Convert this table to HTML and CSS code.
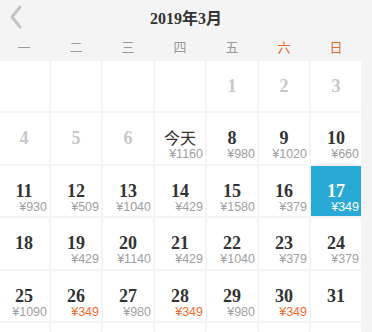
FILE: index.html
```html
<!DOCTYPE html>
<html lang="zh-CN">
<head>
<meta charset="utf-8">
<title>2019年3月</title>
<link rel="stylesheet" href="styles.css">
</head>
<body>
<div class="cal">
  <div class="head">
    <span class="back"><svg width="14" height="24" viewBox="0 0 14 24"><polyline points="11,2 3,12 11,22" fill="none" stroke="#c4c4c4" stroke-width="3" stroke-linecap="round" stroke-linejoin="round"/></svg></span>
    <span class="title">2019年3月</span>
  </div>
  <div class="weeks">
    <span>一</span><span>二</span><span>三</span><span>四</span><span>五</span><span class="we">六</span><span class="we">日</span>
  </div>
  <div class="grid">
    <div class="cell"></div>
    <div class="cell"></div>
    <div class="cell"></div>
    <div class="cell"></div>
    <div class="cell"><b class="num off">1</b></div>
    <div class="cell"><b class="num off">2</b></div>
    <div class="cell"><b class="num off">3</b></div>

    <div class="cell"><b class="num off">4</b></div>
    <div class="cell"><b class="num off">5</b></div>
    <div class="cell"><b class="num off">6</b></div>
    <div class="cell"><span class="today">今天</span><span class="price">¥1160</span></div>
    <div class="cell"><b class="num">8</b><span class="price">¥980</span></div>
    <div class="cell"><b class="num">9</b><span class="price">¥1020</span></div>
    <div class="cell"><b class="num">10</b><span class="price">¥660</span></div>

    <div class="cell"><b class="num">11</b><span class="price">¥930</span></div>
    <div class="cell"><b class="num">12</b><span class="price">¥509</span></div>
    <div class="cell"><b class="num">13</b><span class="price">¥1040</span></div>
    <div class="cell"><b class="num">14</b><span class="price">¥429</span></div>
    <div class="cell"><b class="num">15</b><span class="price">¥1580</span></div>
    <div class="cell"><b class="num">16</b><span class="price">¥379</span></div>
    <div class="cell sel"><b class="num">17</b><span class="price">¥349</span></div>

    <div class="cell"><b class="num">18</b></div>
    <div class="cell"><b class="num">19</b><span class="price">¥429</span></div>
    <div class="cell"><b class="num">20</b><span class="price">¥1140</span></div>
    <div class="cell"><b class="num">21</b><span class="price">¥429</span></div>
    <div class="cell"><b class="num">22</b><span class="price">¥1040</span></div>
    <div class="cell"><b class="num">23</b><span class="price">¥379</span></div>
    <div class="cell"><b class="num">24</b><span class="price">¥379</span></div>

    <div class="cell"><b class="num">25</b><span class="price">¥1090</span></div>
    <div class="cell"><b class="num">26</b><span class="price low">¥349</span></div>
    <div class="cell"><b class="num">27</b><span class="price">¥980</span></div>
    <div class="cell"><b class="num">28</b><span class="price low">¥349</span></div>
    <div class="cell"><b class="num">29</b><span class="price">¥980</span></div>
    <div class="cell"><b class="num">30</b><span class="price low">¥349</span></div>
    <div class="cell"><b class="num">31</b></div>

    <div class="cell"></div>
    <div class="cell"></div>
    <div class="cell"></div>
    <div class="cell"></div>
    <div class="cell"></div>
    <div class="cell"></div>
    <div class="cell"></div>
  </div>
</div>
</body>
</html>
```

FILE: styles.css
```css
html, body {
  margin: 0;
  padding: 0;
  background: #f4f4f4;
  overflow: hidden;
}
.cal {
  width: 372px;
  height: 332px;
  overflow: hidden;
  font-family: "Liberation Sans", "Noto Sans CJK SC", sans-serif;
}
.head {
  height: 34px;
  display: flex;
  align-items: center;
  justify-content: center;
  position: relative;
}
.back {
  position: absolute;
  left: 9px;
  top: 5px;
  display: flex;
}
.title {
  font-family: "Liberation Serif", "Noto Sans CJK SC", serif;
  font-weight: bold;
  font-size: 16px;
  color: #333;
}
.weeks {
  display: grid;
  grid-template-columns: repeat(7, 50px);
  column-gap: 2px;
  margin-left: -1px;
  height: 24px;
  align-items: center;
  font-family: "Noto Sans CJK SC", sans-serif;
  font-size: 13px;
  color: #9a9a9a;
  padding-bottom: 2px;
}
.weeks span {
  text-align: center;
}
.weeks .we {
  color: #e5672c;
}
.grid {
  display: grid;
  grid-template-columns: repeat(7, 50px);
  grid-auto-rows: 50.5px;
  gap: 2px;
  margin-left: -1px;
  margin-top: 0.5px;
}
.cell {
  background: #fff;
  display: flex;
  flex-direction: column;
  align-items: center;
  padding-top: 15px;
  box-sizing: border-box;
}
.num {
  font-family: "Liberation Serif", serif;
  font-weight: bold;
  font-size: 18px;
  line-height: 20px;
  color: #333;
}
.num.off {
  color: #c8c8c8;
}
.today {
  font-family: "Noto Sans CJK SC", sans-serif;
  font-size: 16px;
  line-height: 18px;
  margin-bottom: 2px;
  color: #333;
}
.price {
  align-self: flex-end;
  padding-right: 2px;
  font-size: 12.5px;
  line-height: 13px;
  color: #a0a0a0;
}
.price.low {
  color: #f06a2c;
}
.cell.sel {
  background: #29a9d6;
}
.cell.sel .num,
.cell.sel .price {
  color: #fff;
}
```
